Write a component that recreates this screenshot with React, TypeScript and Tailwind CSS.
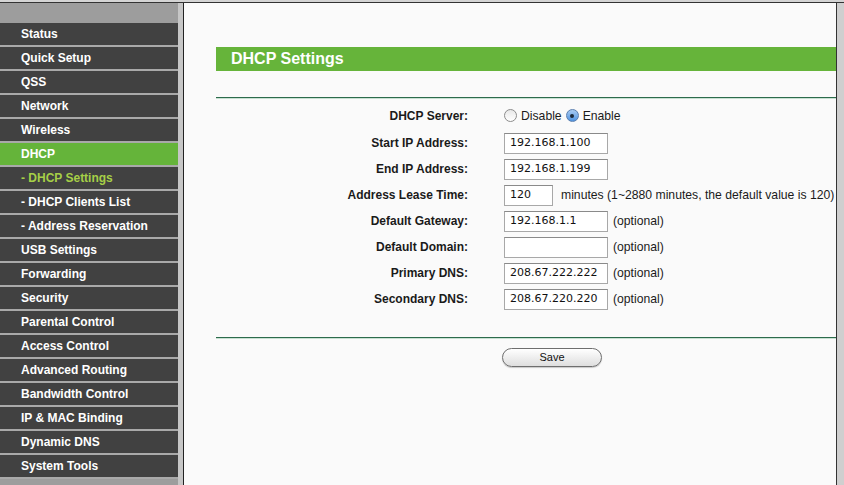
const menu = [
  { label: "Status" },
  { label: "Quick Setup" },
  { label: "QSS" },
  { label: "Network" },
  { label: "Wireless" },
  { label: "DHCP", active: true },
  { label: "- DHCP Settings", sub: true, current: true },
  { label: "- DHCP Clients List", sub: true },
  { label: "- Address Reservation", sub: true },
  { label: "USB Settings" },
  { label: "Forwarding" },
  { label: "Security" },
  { label: "Parental Control" },
  { label: "Access Control" },
  { label: "Advanced Routing" },
  { label: "Bandwidth Control" },
  { label: "IP & MAC Binding" },
  { label: "Dynamic DNS" },
  { label: "System Tools" },
];

function Radio({ checked }: { checked?: boolean }) {
  return checked ? (
    <span className="inline-flex h-[13px] w-[13px] items-center justify-center rounded-full border border-[#5a7fb0] bg-gradient-to-b from-[#a9ccf2] to-[#4f93e0]">
      <span className="h-[4px] w-[4px] rounded-full bg-[#1c2a3a]" />
    </span>
  ) : (
    <span className="inline-block h-[13px] w-[13px] rounded-full border border-[#8c8c8c] bg-gradient-to-b from-[#e8e8e8] to-[#ffffff]" />
  );
}

function Field({ value, w = "w-[104px]" }: { value: string; w?: string }) {
  return (
    <div
      className={`${w} h-[21px] flex items-center border border-[#a8a8a8] border-t-[#8a8a8a] bg-white pl-[5px] text-[11px] text-[#111]`}
      style={{ fontFamily: '"DejaVu Sans", sans-serif' }}
    >
      {value}
    </div>
  );
}

function Row({ label, children, h = "h-[26px]" }: { label: string; children: React.ReactNode; h?: string }) {
  return (
    <div className={`flex items-center ${h}`}>
      <div className="w-[252px] text-right text-[12px] font-bold text-[#1a1a1a]">{label}</div>
      <div className="ml-[36px] flex items-center text-[12.2px] text-[#1a1a1a]">{children}</div>
    </div>
  );
}

const Optional = () => <span className="ml-[5px]">(optional)</span>;

export default function App() {
  return (
    <div
      className="flex h-[485px] w-[844px] flex-col overflow-hidden bg-[#cfcfcf]"
      style={{ fontFamily: '"Liberation Sans", Arial, sans-serif' }}
    >
      <div className="h-[2px] bg-[#d4d4d4]" />
      <div className="h-[1px] bg-[#333]" />
      <div className="flex flex-1">
        {/* Sidebar */}
        <div className="flex w-[178px] flex-col bg-[#9d9d9d]">
          <div className="h-[20px]" />
          {menu.map((m) => (
            <div key={m.label} className="flex flex-col">
              <div
                className={`flex h-[22px] items-center pl-[21px] text-[12px] font-bold ${
                  m.active ? "bg-[#65b43a] text-white" : "bg-[#414141]"
                } ${m.current ? "text-[#a6cf47]" : m.active ? "" : "text-white"}`}
              >
                {m.label}
              </div>
              <div className="h-[2px] bg-[#a9a9a9]" />
            </div>
          ))}
        </div>
        <div className="w-[5px] bg-[#c6c6c6]" />
        <div className="w-[1px] bg-[#222]" />

        {/* Content */}
        <div className="flex flex-1 flex-col bg-[#fafafa] pl-[32px]">
          <div className="mt-[44px] flex h-[24px] items-center bg-[#66b43a] pl-[15px] text-[16px] font-bold text-white">
            DHCP Settings
          </div>
          <div className="mt-[26px] h-[1px] bg-[#2d6b4c]" />
          <div className="h-[1px] bg-[#c7e0d2]" />

          <div className="mt-[3px] flex flex-col">
            <Row label="DHCP Server:" h="h-[28px]">
              <Radio />
              <span className="ml-[4px] mr-[4px]">Disable</span>
              <Radio checked />
              <span className="ml-[4px]">Enable</span>
            </Row>
            <Row label="Start IP Address:">
              <Field value="192.168.1.100" />
            </Row>
            <Row label="End IP Address:">
              <Field value="192.168.1.199" />
            </Row>
            <Row label="Address Lease Time:">
              <Field value="120" w="w-[49px]" />
              <span className="ml-[8px] whitespace-nowrap">minutes (1~2880 minutes, the default value is 120)</span>
            </Row>
            <Row label="Default Gateway:">
              <Field value="192.168.1.1" />
              <Optional />
            </Row>
            <Row label="Default Domain:">
              <Field value="" />
              <Optional />
            </Row>
            <Row label="Primary DNS:">
              <Field value="208.67.222.222" />
              <Optional />
            </Row>
            <Row label="Secondary DNS:">
              <Field value="208.67.220.220" />
              <Optional />
            </Row>
          </div>

          <div className="mt-[25px] h-[1px] bg-[#2d6b4c]" />
          <div className="h-[1px] bg-[#c7e0d2]" />

          <div className="mt-[9px] flex pl-[286px]">
            <button className="flex h-[19px] w-[100px] items-center justify-center rounded-full border border-[#6e6e6e] bg-gradient-to-b from-[#ffffff] to-[#dedede] text-[11px] text-[#111] shadow-[0_1px_1px_rgba(0,0,0,0.2)]">
              Save
            </button>
          </div>
        </div>

        <div className="w-[1px] bg-[#333]" />
        <div className="w-[7px] bg-[#cfcfcf]" />
      </div>
    </div>
  );
}
